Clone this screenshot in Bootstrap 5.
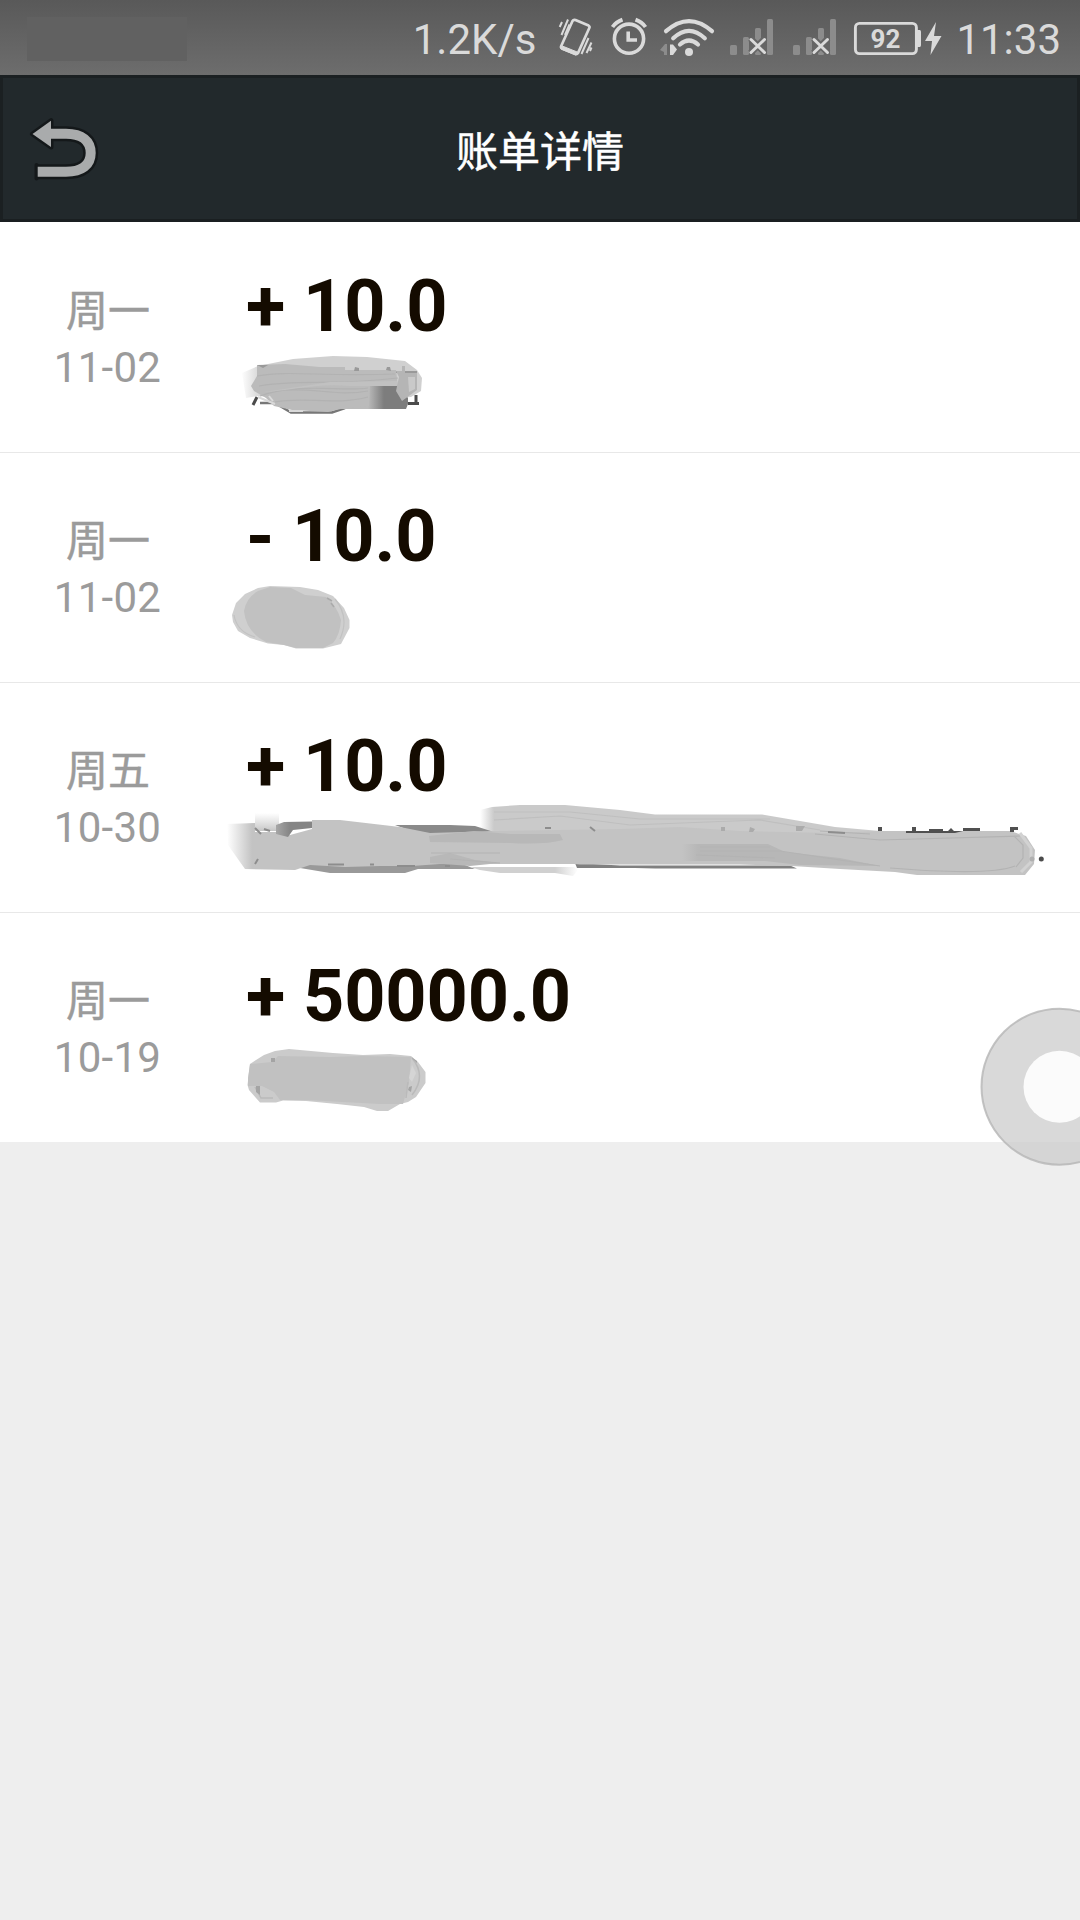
<!DOCTYPE html>
<html lang="zh-CN">
<head>
<meta charset="utf-8">
<meta name="viewport" content="width=device-width, initial-scale=1">
<title>账单详情</title>
<link href="https://cdn.jsdelivr.net/npm/bootstrap@5.3.0/dist/css/bootstrap.min.css" rel="stylesheet">
<style>
  body { font-family: Roboto, "Noto Sans CJK SC", sans-serif; background: #eee; }
  .screen { width: 1080px; height: 1920px; background: #eee; }
  .status-bar { height: 75px; background: linear-gradient(#595959, #6d6d6d); color: #dadada; font-size: 42px; line-height: 77px; padding: 1px 19px 0 27px; }
  .carrier-mask { width: 160px; height: 44px; margin-top: 16px; background: #616161; }
  .speed { margin-right: 20px; }
  .clock { margin-left: 12px; }
  .title-bar { height: 147px; background: #22292c; border: 3px solid #1b2022; border-bottom-color: #1a1f21; }
  .title-side { width: 120px; }
  .page-title { font-size: 42px; line-height: 60px; color: #fff; padding-top: 9px; -webkit-text-stroke: .5px #fff; }
  .bill { height: 230px; }
  .bill + .bill { border-top: 1px solid #e8e8e8; }
  .bill + .bill .bill-in { margin-top: -1px; }
  .bill-date { width: 216px; color: #9b9b9b; font-size: 42px; line-height: 56px; padding-top: 62px; }
  .weekday { -webkit-text-stroke: .5px #9b9b9b; }
  .monthday { letter-spacing: .3px; padding-right: 1px; }
  .amount { height: 118px; padding: 60px 0 0 30px; font-size: 72px; line-height: 49px; font-weight: 700; letter-spacing: -.1px; color: #140b00; white-space: pre; }
  .assist { left: 980px; top: 1007px; }
  svg { display: block; flex: none; }
</style>
</head>
<body>
<div class="screen position-relative overflow-hidden">
  <header class="status-bar d-flex align-items-start">
    <div class="carrier-mask"></div>
    <span class="speed ms-auto">1.2K/s</span>
    <svg width="388" height="74" viewBox="556 1 388 74" fill="none" stroke="#dadada">
      <!-- vibrate -->
      <path d="M575.5 20L588.5 25.5Q590 26.5 589.3 28L578 53Q577 54.500 575.500 54L562 48.500Q560.500 47.500 561.200 46L572.500 21Q573.500 19.300 575.500 20Z" stroke-width="2.700"/>
      <path d="M561 45.500L578.500 52.500L575.500 55L561 49Z" fill="#dadada" stroke-width="1"/>
      <path d="M559.700 27L562 22M561.500 35L568 19.500M581.500 54L588.500 38M586.500 53L591.500 42.500M590 51L591.500 47.500M565 35L569.500 24.500" stroke-width="2"/>
      <!-- alarm -->
      <circle cx="629" cy="38.700" r="14.600" stroke-width="3.600"/>
      <path d="M628.200 31.500V40H637" stroke-width="3.600"/>
      <path d="M612.500 27Q616 22 622.500 19.600M635.500 19.600Q642 22 645.500 27" stroke-width="3.800"/>
      <!-- wifi -->
      <path d="M666 31.200Q689 11 712 31.200" stroke-width="4.200" stroke-linecap="round"/>
      <path d="M673.200 38.300Q689 23.500 704.800 38.300M680 44.500Q689 36.500 698 44.500" stroke-width="4.200" stroke-linecap="round"/>
      <circle cx="689" cy="52" r="4" fill="#dadada" stroke="none"/>
      <path d="M660 50L665 44H667V55H664V52Z" fill="#8c8c8c" stroke="none"/>
      <path d="M670 44.500H673L677 49.500L673 55H670Z" fill="#dadada" stroke="none"/>
      <!-- mobile signals without service -->
      <g id="signal">
        <g fill="#8c8c8c" stroke="none">
          <rect x="730" y="45" width="7" height="10" rx="1.500"/>
          <rect x="743" y="37" width="6" height="18" rx="1.500"/>
          <rect x="755" y="28" width="6" height="27" rx="1.500"/>
          <rect x="767" y="19" width="6" height="36" rx="1.500"/>
        </g>
        <path d="M750.500 38.500L765 53M765 38.500L750.500 53" stroke="#666" stroke-width="6.500"/>
        <path d="M751 39.500L764.500 52.500M764.500 39.500L751 52.500" stroke-width="3" stroke-linecap="round"/>
      </g>
      <use href="#signal" x="63"/>
      <!-- battery -->
      <rect x="855.400" y="23.400" width="61" height="30.200" rx="4" stroke-width="2.900"/>
      <path d="M917 30H920Q921 30.500 921 32V45Q921 46.500 920 47H917Z" fill="#dadada" stroke="none"/>
      <text x="885.500" y="48" text-anchor="middle" font-family="Roboto" font-weight="700" font-size="26" fill="#dadada" stroke="none">92</text>
      <path d="M936 22L925 41H932L930.500 55L941.500 36H934Z" fill="#dadada" stroke="none"/>
    </svg>
    <span class="clock">11:33</span>
  </header>

  <nav class="title-bar d-flex align-items-center justify-content-between">
    <a class="title-side" href="#" aria-label="返回">
      <svg width="120" height="141" viewBox="3 78 120 141" fill="none">
        <g stroke="#14181a" stroke-linejoin="round">
          <path d="M51 133.700H66C82 133.700 90.700 141 90.700 153C90.700 165 82 171.800 66 171.800H37.700" stroke-width="15"/>
          <path d="M36.500 165V178.500" stroke-width="4" stroke-linecap="round"/>
          <path d="M32.500 134L51 120.700V147Z" fill="#14181a" stroke-width="5"/>
        </g>
        <path d="M50 133.700H66C82 133.700 90.700 141 90.700 153C90.700 165 82 171.800 66 171.800H37.700" stroke="#a9abac" stroke-width="10"/>
        <path d="M32.500 134L51 120.700V147Z" fill="#a9abac"/>
      </svg>
    </a>
    <div class="page-title">账单详情</div>
    <div class="title-side"></div>
  </nav>

  <main class="bg-white">
    <section class="bill"><div class="bill-in d-flex">
      <div class="bill-date text-center"><div class="weekday">周一</div><div class="monthday">11-02</div></div>
      <div>
        <div class="amount">+ 10.0</div>
        <svg width="864" height="90" viewBox="216 340 864 90">
          <defs>
            <linearGradient id="fadeA" gradientUnits="userSpaceOnUse" x1="241" x2="262"><stop stop-color="#d2d2d2" stop-opacity="0"/><stop offset="1" stop-color="#d0d0d0"/></linearGradient>
            <linearGradient id="fadeB" gradientUnits="userSpaceOnUse" x1="368" x2="384"><stop stop-color="#bbb"/><stop offset="1" stop-color="#7d7d7d"/></linearGradient>
          </defs>
          <path d="M257 397L253 405M416 395V403M408 403.500H419" stroke="#4b4b4b" stroke-width="3"/>
          <path d="M260 403H275L291 412.500H332L345 408" fill="none" stroke="#777" stroke-width="2.500"/>
          <path d="M242 373L258 366L293 359L333 356L367 357L405 361L417 370L422 378L421 391L411 397L330 402L258 396L246 398Z" fill="url(#fadeA)"/>
          <path d="M360 385H398L408 398V404L406 409H330V400Z" fill="url(#fadeB)"/>
          <path d="M257 365L285 364L320 367L345 367V370L396 370L398 386L370 386L369 406L345 408L328 412L292 410L274 406L266 398L254 391L251 386L257 376Z" fill="#bbb"/>
          <path d="M257 365H268L263 368ZM355 367L359 368V371H354ZM387 367L390 367L391 371L386 370ZM396 371H417V373H396Z" fill="#999"/>
          <path d="M396 371H402V366H405V373H417V390L402 401L396 391L399 377Z" fill="#b5b5b5"/>
          <path d="M408 377H415V389L409 392Z" fill="#c9c9c9"/>
          <path d="M257 376C290 370 320 377 395 374M259 386C300 379 330 386 398 378M260 396C300 382 340 392 368 388M276 391C310 386 335 397 368 391M275 402C306 396 335 406 368 397" fill="none" stroke="#b2b2b2" stroke-width="1.200"/>
          <path d="M264 392C290 391 315 383 350 386L397 386L397 381L330 382Z" fill="#c1c1c1"/>
          <path d="M269 396L273 401M258 397L275 404M289 411H303" stroke="#d9d9d9" stroke-width="2"/>
        </svg>
      </div>
    </div></section>

    <section class="bill"><div class="bill-in d-flex">
      <div class="bill-date text-center"><div class="weekday">周一</div><div class="monthday">11-02</div></div>
      <div>
        <div class="amount">- 10.0</div>
        <svg width="864" height="90" viewBox="216 570 864 90">
          <path d="M232 615L236 603L245 594L258 588L270 586L300 587L318 590L333 596L344 608L349.500 620V628L341 644L323 648.500H296L284 645L268 643.500L250 638L238 631L233 622Z" fill="#cfcfcf"/>
          <path d="M234 615Q237 632 255 637M335 599Q350 617 340 639" fill="none" stroke="#c2c2c2" stroke-width="1.200"/>
          <path d="M244 611Q246 598 258 591L270 587L291 588L305 595L326 597Q337 606 341 620Q340 635 333 643L323 648H296L284 645L266 642Q246 632 244 611Z" fill="#c1c1c1"/>
          <path d="M327 598L332 601M331 603L334 607" stroke="#aaa" stroke-width="1.500"/>
        </svg>
      </div>
    </div></section>

    <section class="bill"><div class="bill-in d-flex">
      <div class="bill-date text-center"><div class="weekday">周五</div><div class="monthday">10-30</div></div>
      <div>
        <div class="amount">+ 10.0</div>
        <svg width="864" height="90" viewBox="216 800 864 90">
          <defs>
            <linearGradient id="fadeC" gradientUnits="userSpaceOnUse" x1="227" x2="252"><stop stop-color="#c4c4c4" stop-opacity="0"/><stop offset="1" stop-color="#c3c3c3"/></linearGradient>
            <linearGradient id="fadeD" gradientUnits="userSpaceOnUse" x1="480" x2="494"><stop stop-color="#cacaca" stop-opacity="0"/><stop offset="1" stop-color="#cacaca"/></linearGradient>
            <linearGradient id="fadeE" x2="0" y2="1"><stop stop-color="#ccc" stop-opacity="0"/><stop offset="1" stop-color="#c6c6c6"/></linearGradient>
            <linearGradient id="fadeF" gradientUnits="userSpaceOnUse" x1="555" x2="578"><stop stop-color="#d0d0d0"/><stop offset="1" stop-color="#d0d0d0" stop-opacity="0"/></linearGradient>
            <linearGradient id="fadeG" gradientUnits="userSpaceOnUse" x1="682" x2="698"><stop stop-color="#b7b7b7" stop-opacity="0"/><stop offset="1" stop-color="#b7b7b7"/></linearGradient>
            <linearGradient id="fadeH" gradientUnits="userSpaceOnUse" x1="270" x2="290"><stop stop-color="#b5b5b5"/><stop offset="1" stop-color="#858585"/></linearGradient>
          </defs>
          <rect x="255" y="813" width="24" height="18" fill="url(#fadeE)"/>
          <path d="M480 810L492 807L520 805H565L620 810L655 814.500H762L800 821L835 827L880 831L880 850H480Z" fill="url(#fadeD)"/>
          <path d="M494 812H570L640 819L770 819M494 820L560 816L630 825L760 820L820 830" fill="none" stroke="#bfbfbf" stroke-width="1.200"/>
          <path d="M395 825H450L475 826L494 832L470 836H425Z" fill="#8a8a8a"/>
          <path d="M300 860L460 863L475 869H418L405 873H330L300 868Z" fill="#999"/>
          <path d="M575 863L620 865.500H790L797 868.500H655L635 868H577Z" fill="#808080"/>
          <path d="M227 824L255 823V832H278L290 835L312 829V820L340 820L400 827L430 833L495 831L620 829L680 827L740 831L830 833L880 831L1010 831L1026 836L1035 850L1034 864L1025 875H917L895 872L840 869L792 866L740 864.500H580L574 864H440L412 866H380L345 867L310 865L295 870L245 869L240 862L228 845Z" fill="url(#fadeC)"/>
          <path d="M276 825L284 822L312 821.500V828L293 830L288 837L276 834Z" fill="url(#fadeH)"/>
          <path d="M470 867H574L578 870L573 876L555 873H500L480 870Z" fill="url(#fadeF)"/>
          <path d="M429 836L474 831L510 834L560 834L563 840Q545 845 510 843L430 842Z" fill="#b8b8b8"/>
          <path d="M430 857L450 853L475 860L500 863L470 866L430 863Z" fill="#b8b8b8"/>
          <path d="M682 844H768L785 852L840 858L880 866L800 865L765 861L682 861Z" fill="url(#fadeG)"/>
          <path d="M431 853H500M450 859L500 863M700 847H770M700 851H780L880 866M696 855L775 858M815 834L880 840L1020 836M820 831L870 834M890 868Q990 876 1015 866M1014 836L1023 845V858L1016 867" fill="none" stroke="#b3b3b3" stroke-width="1.200"/>
          <path d="M1020 833L1031 848V862L1021 872" fill="none" stroke="#d2d2d2" stroke-width="3"/>
          <path d="M721 827H725V831H721ZM750 827L755 829L753 832H749ZM796 826H805L802 831H796Z" fill="#ababab"/>
          <path d="M264 829L270 831M255 828L261 834M255 864L258 859M328 864.500H344M370 864.500H374M397 866H415M445 866H450M545 828H551M590 827L595 831M828 832L845 833" stroke="#8d8d8d" stroke-width="2"/>
          <path d="M878 827H882V831H878ZM912 827H916V832H912ZM929 829H943V832H929ZM951 828L954 831H948ZM963 828H980V831H963ZM1010 827H1018V830H1014V832H1010ZM906 831H963L955 833H906Z" fill="#505050"/>
          <circle cx="1032" cy="859" r="2.500" fill="#b0b0b0"/><circle cx="1041.300" cy="859" r="2.500" fill="#4b4b4b"/>
        </svg>
      </div>
    </div></section>

    <section class="bill"><div class="bill-in d-flex">
      <div class="bill-date text-center"><div class="weekday">周一</div><div class="monthday">10-19</div></div>
      <div>
        <div class="amount">+ 50000.0</div>
        <svg width="864" height="90" viewBox="216 1030 864 90">
          <path d="M247.500 1085L250 1064L256 1060L264 1055L275 1051L289 1049L333 1053L363 1055L390 1054L411 1056L418 1062L425.500 1072V1083L416 1097L408 1102L400 1104L388 1111H377L364 1107L337 1104L306 1101L283 1100.500L276 1102.500H260L249 1090Z" fill="#cbcbcb"/>
          <path d="M248 1078L250 1064L272 1062L278 1056L330 1057L363 1056L411 1057L409 1082L403 1104L380 1104L306 1100H280L274 1092L262 1086H248Z" fill="#c1c1c1"/>
          <path d="M412 1058Q427 1076 412 1095M408 1082L406 1098M255 1087L261 1098H273" fill="none" stroke="#bababa" stroke-width="1.500"/>
          <path d="M412 1065L416 1073L412 1082L409 1078Z" fill="#d5d5d5"/>
          <path d="M271 1058H275V1062H271ZM256 1086H260V1095L256 1092ZM409 1087L412 1086L411 1092L408 1090ZM411 1057L417 1061V1063Z" fill="#a4a4a4"/>
        </svg>
      </div>
    </div></section>
  </main>

  <svg class="assist position-absolute" width="100" height="160" viewBox="980 1007 100 160">
    <circle cx="1059.500" cy="1086.700" r="78" fill="#ccc" fill-opacity=".75" stroke="#b5b5b5" stroke-opacity=".8" stroke-width="2"/>
    <circle cx="1059.500" cy="1086.700" r="36" fill="#fbfbfb"/>
  </svg>
</div>
<script src="https://cdn.jsdelivr.net/npm/bootstrap@5.3.0/dist/js/bootstrap.bundle.min.js"></script>
</body>
</html>
